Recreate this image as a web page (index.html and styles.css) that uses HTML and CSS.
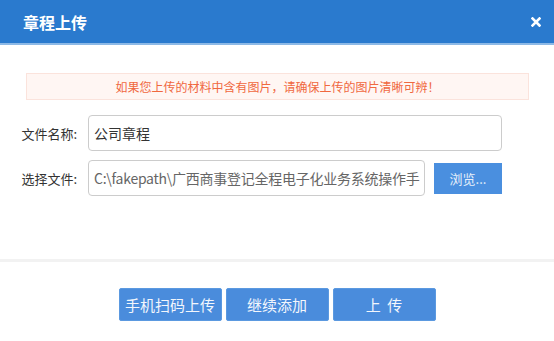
FILE: index.html
```html
<!DOCTYPE html>
<html lang="zh-CN">
<head>
    <meta charset="UTF-8">
    <title>章程上传</title>
    <link rel="stylesheet" href="styles.css">
</head>
<body>
    <div class="dialog">
        <div class="dialog-header">
            <span class="dialog-title">章程上传</span>
            <span class="dialog-close">
                <svg width="10" height="10" viewBox="0 0 10 10"><path d="M1.5 1.5 L8.5 8.5 M8.5 1.5 L1.5 8.5" stroke="#fff" stroke-width="2.6" stroke-linecap="square"/></svg>
            </span>
        </div>
        <div class="dialog-body">
            <div class="tip">如果您上传的材料中含有图片，请确保上传的图片清晰可辨！</div>
            <div class="form-row">
                <label class="form-label">文件名称:</label>
                <input type="text" class="form-input name-input" value="公司章程">
            </div>
            <div class="form-row">
                <label class="form-label">选择文件:</label>
                <div class="form-input file-input">C:\fakepath\广西商事登记全程电子化业务系统操作手</div>
                <button class="browse-btn">浏览...</button>
            </div>
        </div>
        <div class="dialog-footer">
            <button class="btn">手机扫码上传</button>
            <button class="btn">继续添加</button>
            <button class="btn">上&nbsp;&nbsp;传</button>
        </div>
    </div>
</body>
</html>
```

FILE: styles.css
```css
body {
    margin: 0;
    background: #fff;
    font-family: "Noto Sans CJK SC", "Noto Sans", sans-serif;
}
.dialog {
    width: 554px;
    height: 341px;
    background: #fff;
}
.dialog-header {
    height: 43px;
    background-color: #2a7ace;
    border-bottom: 2px solid #8db9e6;
    display: flex;
    align-items: center;
    justify-content: space-between;
    padding: 0 13px 0 23px;
}
.dialog-title {
    color: #fff;
    font-size: 16px;
    font-weight: bold;
    line-height: 20px;
    margin-top: 1px;
}
.dialog-close {
    display: flex;
    margin-top: 1px;
}
.dialog-body {
    height: 217px;
    padding: 28px 25px 0 26px;
    box-sizing: border-box;
    border-bottom: 3px solid #f2f2f2;
}
.tip {
    height: 27px;
    box-sizing: border-box;
    border: 1px solid #fbe3dc;
    background-color: #fff6f3;
    color: #f0683f;
    font-size: 12px;
    line-height: 25px;
    text-align: center;
    margin-bottom: 15px;
}
.form-row {
    display: flex;
    align-items: center;
    height: 36px;
    margin-bottom: 9px;
}
.form-label {
    width: 56px;
    margin-left: -5px;
    margin-right: 11px;
    font-size: 13px;
    color: #333;
    text-align: right;
}
.form-input {
    height: 36px;
    box-sizing: border-box;
    border: 1px solid #ccc;
    border-radius: 4px;
    padding: 0 5px;
    font-family: inherit;
    font-size: 14px;
    line-height: 34px;
    outline: none;
}
.name-input {
    width: 414px;
    color: #333;
}
.file-input {
    width: 337px;
    padding-right: 2px;
    color: #666;
    letter-spacing: -0.25px;
    white-space: nowrap;
    overflow: hidden;
}
.browse-btn {
    width: 68px;
    height: 31px;
    margin-left: 9px;
    border: none;
    background-color: #4a8fdf;
    color: #e6effa;
    font-family: inherit;
    font-size: 13px;
    padding: 0;
}
.dialog-footer {
    display: flex;
    justify-content: center;
    gap: 4px;
    padding-top: 26px;
}
.btn {
    width: 103px;
    height: 33px;
    border: 1px solid #5b99e0;
    border-radius: 2px;
    background-color: #4a8cdc;
    color: #f2f6fc;
    font-family: inherit;
    font-size: 15px;
    padding: 0;
}
```
